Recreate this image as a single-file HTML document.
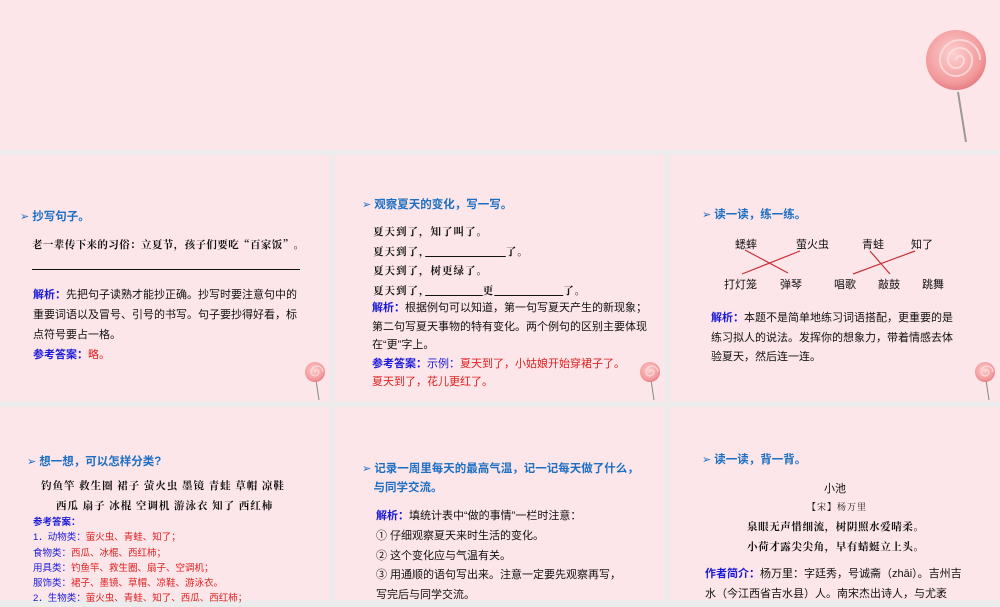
<!DOCTYPE html>
<html><head><meta charset="utf-8"><style>
body{margin:0;width:1000px;height:600px;background:#ececec;position:relative;overflow:hidden;font-family:"Liberation Sans","Noto Sans CJK SC",sans-serif;}
.p{position:absolute;background:#fde6ea;}
.t{position:absolute;white-space:nowrap;font-size:11px;color:#111;line-height:14px;}
.h{font-weight:bold;color:#1d6fc4;font-size:11.5px;}
.h:before{content:"➢ ";color:#1d6fc4;font-weight:normal;font-size:11px;}
.k{font-family:"Noto Serif CJK SC",serif;font-weight:bold;letter-spacing:1px;font-size:10.5px;}
.b{color:#1a1ad8;font-weight:bold;}
.r{color:#e02020;}
.bl{color:#1a1ad8;}
</style></head><body>
<div class="p" style="left:0;top:0;width:1000px;height:150px"></div>
<div class="p" style="left:0;top:155px;width:330px;height:247px"></div>
<div class="p" style="left:335px;top:155px;width:330px;height:247px"></div>
<div class="p" style="left:670px;top:155px;width:330px;height:247px"></div>
<div class="p" style="left:0;top:407px;width:330px;height:193px"></div>
<div class="p" style="left:335px;top:407px;width:330px;height:193px"></div>
<div class="p" style="left:670px;top:407px;width:330px;height:193px"></div>

<svg width="1000" height="600" style="position:absolute;left:0;top:0">
<defs><radialGradient id="g" cx="0.45" cy="0.4" r="0.6"><stop offset="0" stop-color="#fcd0d0"/><stop offset="0.8" stop-color="#f39a9c"/><stop offset="1" stop-color="#e57f86"/></radialGradient></defs>
<line x1="958" y1="92" x2="966" y2="142" stroke="#999" stroke-width="2"/>
<circle cx="956" cy="60" r="30" fill="url(#g)"/>
<path d="M956 60 a4 4 0 0 1 8 0 a8 8 0 0 1 -16 0 a12 12 0 0 1 24 0 a16 16 0 0 1 -32 0 a20 20 0 0 1 40 0" fill="none" stroke="#fde0e0" stroke-width="2" opacity="0.8"/>
<g id="s"><line x1="316" y1="380" x2="319" y2="400" stroke="#888" stroke-width="1"/><circle cx="315" cy="372" r="10" fill="url(#g)"/><path d="M315 372 a2 2 0 0 1 4 0 a4 4 0 0 1 -8 0 a6 6 0 0 1 12 0" fill="none" stroke="#fde0e0" stroke-width="1"/></g>
<use href="#s" x="335"/><use href="#s" x="670"/>
<line x1="32" y1="269.5" x2="300" y2="269.5" stroke="#111" stroke-width="1"/>
<g stroke="#c8323a" stroke-width="1.2"><line x1="745" y1="250" x2="788" y2="273"/><line x1="800" y1="251" x2="742" y2="274"/><line x1="870" y1="251" x2="890" y2="274"/><line x1="915" y1="251" x2="853" y2="274"/></g>
</svg>

<div class="t h" style="left:20px;top:210px">抄写句子。</div>
<div class="t k" style="left:32px;top:238px;letter-spacing:0.4px">老一辈传下来的习俗：立夏节，孩子们要吃“百家饭”。</div>
<div class="t" style="left:33px;top:285px;line-height:20px"><span class="b">解析：</span>先把句子读熟才能抄正确。抄写时要注意句中的<br>重要词语以及冒号、引号的书写。句子要抄得好看，标<br>点符号要占一格。<br><span class="b">参考答案：</span><span class="r">略。</span></div>

<div class="t h" style="left:362px;top:198px">观察夏天的变化，写一写。</div>
<div class="t k" style="left:373px;top:222px;line-height:19.5px">夏天到了，知了叫了。<br>夏天到了，<u>　　　　　　　</u>了。<br>夏天到了，树更绿了。<br>夏天到了，<u>　　　　　</u>更<u>　　　　　　</u>了。</div>
<div class="t" style="left:372px;top:299px;line-height:18.5px"><span class="b">解析：</span>根据例句可以知道，第一句写夏天产生的新现象；<br>第二句写夏天事物的特有变化。两个例句的区别主要体现<br>在“更”字上。<br><span class="b">参考答案：</span><span class="bl">示例：</span><span class="r">夏天到了，小姑娘开始穿裙子了。</span><br><span class="r">夏天到了，花儿更红了。</span></div>

<div class="t h" style="left:702px;top:208px">读一读，练一练。</div>
<div class="t" style="left:735px;top:238px">蟋蟀</div><div class="t" style="left:796px;top:238px">萤火虫</div><div class="t" style="left:862px;top:238px">青蛙</div><div class="t" style="left:911px;top:238px">知了</div>
<div class="t" style="left:724px;top:278px">打灯笼</div><div class="t" style="left:780px;top:278px">弹琴</div><div class="t" style="left:834px;top:278px">唱歌</div><div class="t" style="left:878px;top:278px">敲鼓</div><div class="t" style="left:922px;top:278px">跳舞</div>
<div class="t" style="left:711px;top:309px;line-height:19.5px"><span class="b">解析：</span>本题不是简单地练习词语搭配，更重要的是<br>练习拟人的说法。发挥你的想象力，带着情感去体<br>验夏天，然后连一连。</div>

<div class="t h" style="left:27px;top:455px">想一想，可以怎样分类?</div>
<div class="t k" style="left:41px;top:479px">钓鱼竿 救生圈 裙子 萤火虫 墨镜 青蛙 草帽 凉鞋</div>
<div class="t k" style="left:56px;top:499px">西瓜 扇子 冰棍 空调机 游泳衣 知了 西红柿</div>
<div class="t" style="left:33px;top:515px;font-size:9.5px;line-height:15.3px"><span class="b">参考答案：</span><br><span class="bl">1．动物类：</span><span class="r">萤火虫、青蛙、知了；</span><br><span class="bl">食物类：</span><span class="r">西瓜、冰棍、西红柿；</span><br><span class="bl">用具类：</span><span class="r">钓鱼竿、救生圈、扇子、空调机；</span><br><span class="bl">服饰类：</span><span class="r">裙子、墨镜、草帽、凉鞋、游泳衣。</span><br><span class="bl">2．生物类：</span><span class="r">萤火虫、青蛙、知了、西瓜、西红柿；</span></div>

<div class="t h" style="left:362px;top:460px;line-height:19px">记录一周里每天的最高气温，记一记每天做了什么，<br>　与同学交流。</div>
<div class="t" style="left:376px;top:507px;line-height:19.8px"><span class="b">解析：</span>填统计表中“做的事情”一栏时注意：<br>① 仔细观察夏天来时生活的变化。<br>② 这个变化应与气温有关。<br>③ 用通顺的语句写出来。注意一定要先观察再写，<br>写完后与同学交流。</div>

<div class="t h" style="left:702px;top:453px">读一读，背一背。</div>
<div class="t" style="left:824px;top:482px">小池</div>
<div class="t k" style="left:807px;top:500px;font-size:9px;font-weight:normal">【宋】杨万里</div>
<div class="t k" style="left:747px;top:517px;line-height:20px;letter-spacing:0.6px">泉眼无声惜细流，树阴照水爱晴柔。<br>小荷才露尖尖角，早有蜻蜓立上头。</div>
<div class="t" style="left:705px;top:564px;line-height:20px"><span class="b">作者简介：</span>杨万里：字廷秀，号诚斋（zhāi）。吉州吉<br>水（今江西省吉水县）人。南宋杰出诗人，与尤袤</div>
</body></html>
